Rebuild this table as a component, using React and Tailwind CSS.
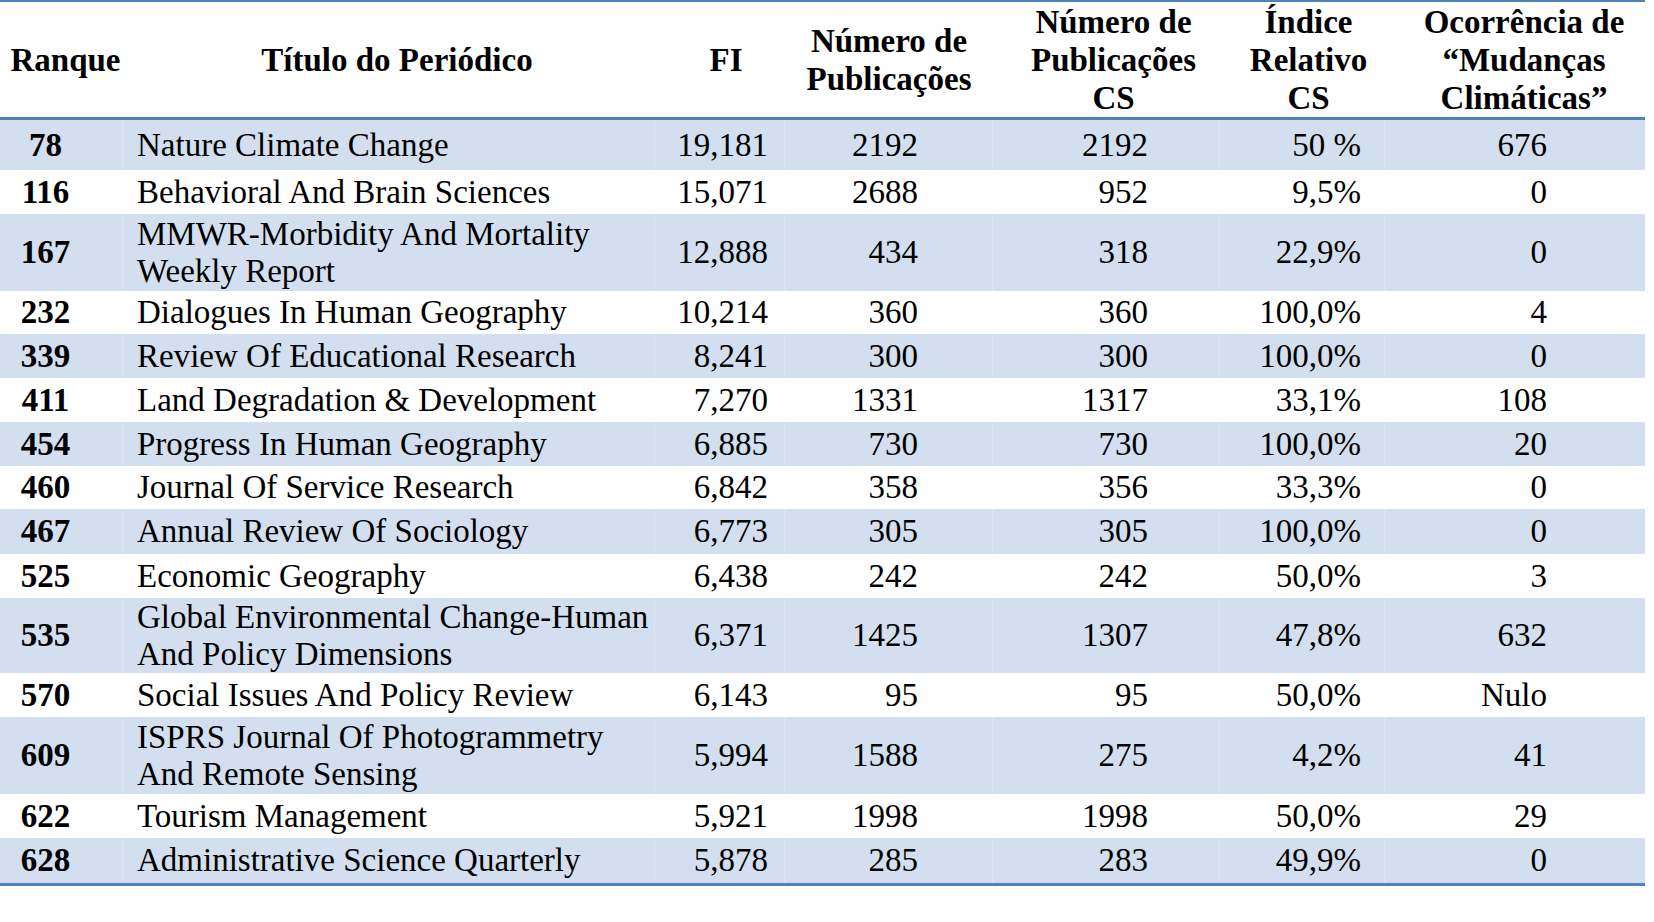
const rows = [
  { r: "78", t: ["Nature Climate Change"], fi: "19,181", np: "2192", cs: "2192", ir: "50 %", oc: "676", h: "h-[50px]" },
  { r: "116", t: ["Behavioral And Brain Sciences"], fi: "15,071", np: "2688", cs: "952", ir: "9,5%", oc: "0", h: "h-[44px]" },
  { r: "167", t: ["MMWR-Morbidity And Mortality", "Weekly Report"], fi: "12,888", np: "434", cs: "318", ir: "22,9%", oc: "0", h: "h-[77px]" },
  { r: "232", t: ["Dialogues In Human Geography"], fi: "10,214", np: "360", cs: "360", ir: "100,0%", oc: "4", h: "h-[43px]" },
  { r: "339", t: ["Review Of Educational Research"], fi: "8,241", np: "300", cs: "300", ir: "100,0%", oc: "0", h: "h-[44px]" },
  { r: "411", t: ["Land Degradation & Development"], fi: "7,270", np: "1331", cs: "1317", ir: "33,1%", oc: "108", h: "h-[44px]" },
  { r: "454", t: ["Progress In Human Geography"], fi: "6,885", np: "730", cs: "730", ir: "100,0%", oc: "20", h: "h-[44px]" },
  { r: "460", t: ["Journal Of Service Research"], fi: "6,842", np: "358", cs: "356", ir: "33,3%", oc: "0", h: "h-[43px]" },
  { r: "467", t: ["Annual Review Of Sociology"], fi: "6,773", np: "305", cs: "305", ir: "100,0%", oc: "0", h: "h-[45px]" },
  { r: "525", t: ["Economic Geography"], fi: "6,438", np: "242", cs: "242", ir: "50,0%", oc: "3", h: "h-[44px]" },
  { r: "535", t: ["Global Environmental Change-Human", "And Policy Dimensions"], fi: "6,371", np: "1425", cs: "1307", ir: "47,8%", oc: "632", h: "h-[75px]" },
  { r: "570", t: ["Social Issues And Policy Review"], fi: "6,143", np: "95", cs: "95", ir: "50,0%", oc: "Nulo", h: "h-[44px]" },
  { r: "609", t: ["ISPRS Journal Of Photogrammetry", "And Remote Sensing"], fi: "5,994", np: "1588", cs: "275", ir: "4,2%", oc: "41", h: "h-[77px]" },
  { r: "622", t: ["Tourism Management"], fi: "5,921", np: "1998", cs: "1998", ir: "50,0%", oc: "29", h: "h-[44px]" },
  { r: "628", t: ["Administrative Science Quarterly"], fi: "5,878", np: "285", cs: "283", ir: "49,9%", oc: "0", h: "h-[45px]" },
];

const cols = "grid grid-cols-[123px_532px_130px_208px_227px_165px_260px]";

function Lines({ lines }) {
  return lines.map((l, i) => (
    <span key={i} className="block whitespace-nowrap">{l}</span>
  ));
}

const hcell = "flex flex-col items-center justify-center text-center";

export default function App() {
  return (
    <div className="w-[1654px] h-[922px] bg-white font-['Liberation_Serif',serif] text-black">
      <div className="w-[1645px]">
        {/* header */}
        <div className={`${cols} h-[120px] border-t-2 border-b-[3px] border-[#4f81bd] text-[33px] leading-[38px] font-bold`}>
          <div className={`${hcell} pl-[8px]`}>Ranque</div>
          <div className={`${hcell} pl-[16px]`}>Título do Periódico</div>
          <div className={`${hcell} pl-[12px]`}>FI</div>
          <div className={hcell}><Lines lines={["Número de", "Publicações"]} /></div>
          <div className={`${hcell} pl-[14px]`}><Lines lines={["Número de", "Publicações", "CS"]} /></div>
          <div className={`${hcell} pl-[12px]`}><Lines lines={["Índice", "Relativo", "CS"]} /></div>
          <div className={`${hcell} pl-[18px]`}><Lines lines={["Ocorrência de", "“Mudanças", "Climáticas”"]} /></div>
        </div>
        {/* body */}
        <div className="border-b-[3px] border-[#4f81bd]">
          {rows.map((row, i) => {
            const band = i % 2 === 0;
            const bg = band ? "bg-[#d3dfee]" : "bg-white";
            const ln = band ? "border-r border-[#dde6f1]" : "border-r border-white";
            return (
              <div key={row.r} className={`${cols} ${row.h} ${bg} text-[33px] leading-[37px]`}>
                <div className={`flex items-center justify-center pr-[31px] font-bold ${ln}`}>{row.r}</div>
                <div className={`flex flex-col justify-center pl-[14px] ${ln}`}><Lines lines={row.t} /></div>
                <div className={`flex items-center justify-end pr-[16px] ${ln}`}>{row.fi}</div>
                <div className={`flex items-center justify-end pr-[74px] ${ln}`}>{row.np}</div>
                <div className={`flex items-center justify-end pr-[71px] ${ln}`}>{row.cs}</div>
                <div className={`flex items-center justify-end pr-[23px] ${ln}`}>{row.ir}</div>
                <div className="flex items-center justify-end pr-[98px]">{row.oc}</div>
              </div>
            );
          })}
        </div>
      </div>
    </div>
  );
}
